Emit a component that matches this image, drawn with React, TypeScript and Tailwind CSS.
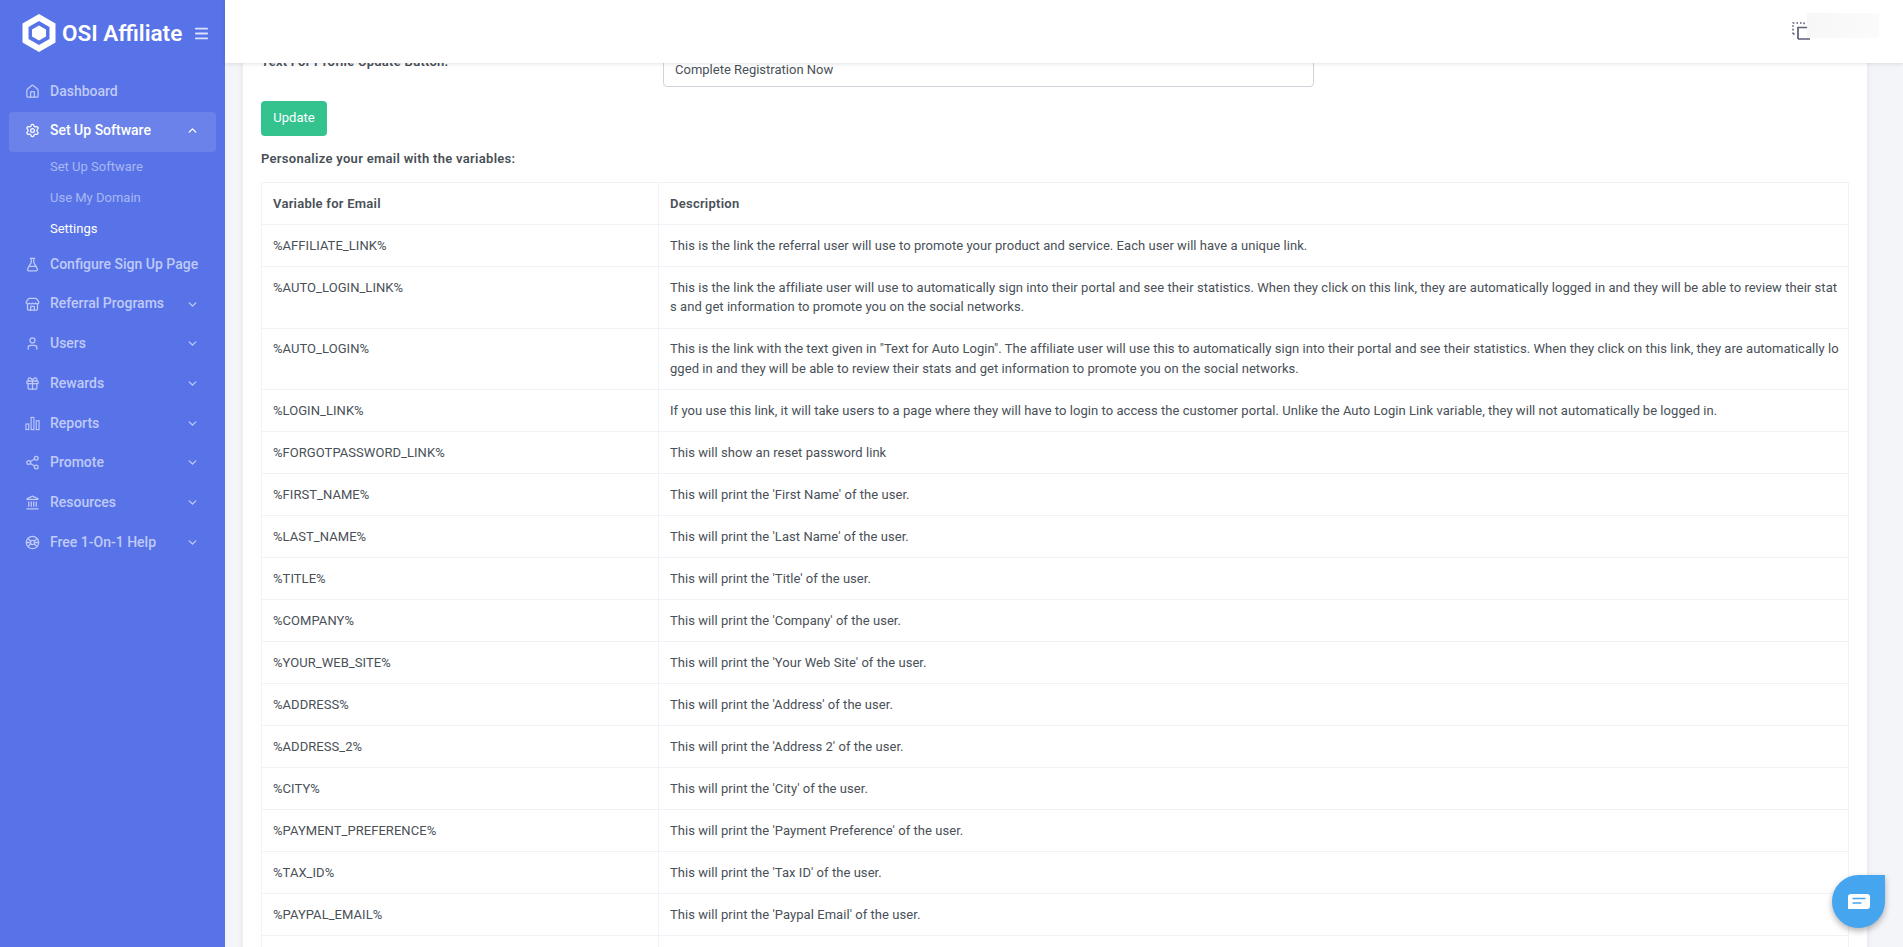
import { ChevronDown, ChevronUp, FlaskConical, Gift, Home, Landmark, Menu, Settings, Share2, Store, User } from "lucide-react";
import type { ReactNode } from "react";

const iconClass = "h-[15px] w-[15px]";

function ChartIcon() {
  return (
    <svg viewBox="0 0 16 16" className={iconClass} fill="none" stroke="currentColor" strokeWidth="1.2">
      <rect x="1" y="8.5" width="3" height="6" />
      <rect x="6.5" y="1.5" width="3" height="13" />
      <rect x="12" y="5" width="3" height="9.5" />
    </svg>
  );
}

function HelpIcon() {
  return (
    <svg viewBox="0 0 16 16" className={iconClass} fill="none" stroke="currentColor" strokeWidth="1.4">
      <circle cx="8" cy="8" r="6.6" />
      <circle cx="8" cy="8" r="2.2" />
      <path d="M3 3.5 6 6.4M13 3.5l-3 2.9M3 12.5l3-2.9M13 12.5l-3-2.9M1.5 8h4M10.5 8h4" />
    </svg>
  );
}

const lowerNav: { label: string; icon: ReactNode }[] = [
  { label: "Referral Programs", icon: <Store className={iconClass} /> },
  { label: "Users", icon: <User className={iconClass} /> },
  { label: "Rewards", icon: <Gift className={iconClass} /> },
  { label: "Reports", icon: <ChartIcon /> },
  { label: "Promote", icon: <Share2 className={iconClass} /> },
  { label: "Resources", icon: <Landmark className={iconClass} /> },
  { label: "Free 1-On-1 Help", icon: <HelpIcon /> },
];

const rows: { name: string; lines: string[] }[] = [
  { name: "%AFFILIATE_LINK%", lines: ["This is the link the referral user will use to promote your product and service. Each user will have a unique link."] },
  {
    name: "%AUTO_LOGIN_LINK%",
    lines: [
      "This is the link the affiliate user will use to automatically sign into their portal and see their statistics. When they click on this link, they are automatically logged in and they will be able to review their stat",
      "s and get information to promote you on the social networks.",
    ],
  },
  {
    name: "%AUTO_LOGIN%",
    lines: [
      'This is the link with the text given in "Text for Auto Login". The affiliate user will use this to automatically sign into their portal and see their statistics. When they click on this link, they are automatically lo',
      "gged in and they will be able to review their stats and get information to promote you on the social networks.",
    ],
  },
  { name: "%LOGIN_LINK%", lines: ["If you use this link, it will take users to a page where they will have to login to access the customer portal. Unlike the Auto Login Link variable, they will not automatically be logged in."] },
  { name: "%FORGOTPASSWORD_LINK%", lines: ["This will show an reset password link"] },
  { name: "%FIRST_NAME%", lines: ["This will print the 'First Name' of the user."] },
  { name: "%LAST_NAME%", lines: ["This will print the 'Last Name' of the user."] },
  { name: "%TITLE%", lines: ["This will print the 'Title' of the user."] },
  { name: "%COMPANY%", lines: ["This will print the 'Company' of the user."] },
  { name: "%YOUR_WEB_SITE%", lines: ["This will print the 'Your Web Site' of the user."] },
  { name: "%ADDRESS%", lines: ["This will print the 'Address' of the user."] },
  { name: "%ADDRESS_2%", lines: ["This will print the 'Address 2' of the user."] },
  { name: "%CITY%", lines: ["This will print the 'City' of the user."] },
  { name: "%PAYMENT_PREFERENCE%", lines: ["This will print the 'Payment Preference' of the user."] },
  { name: "%TAX_ID%", lines: ["This will print the 'Tax ID' of the user."] },
  { name: "%PAYPAL_EMAIL%", lines: ["This will print the 'Paypal Email' of the user."] },
];

function NavItem({ label, icon, chevron = true }: { label: string; icon: ReactNode; chevron?: boolean }) {
  return (
    <div className="flex h-[39.7px] items-center pl-[25px] pr-[26px] text-[#bfcaf7]">
      <span className="flex w-[25px] shrink-0">{icon}</span>
      <span className="flex-1 whitespace-nowrap text-[14px] font-medium">{label}</span>
      {chevron && <ChevronDown className="h-[13px] w-[13px]" strokeWidth={2.5} />}
    </div>
  );
}

export default function App() {
  return (
    <div className="flex h-screen overflow-hidden bg-[#f4f5f8] font-['Roboto',sans-serif] text-[13px] leading-[19.5px] text-[#495057]">
      <aside className="flex w-[225px] shrink-0 flex-col bg-[#5873e8]">
        <div className="flex h-[63px] items-center pl-[22px] pr-[15px] pt-[3px] text-white">
          <svg viewBox="0 0 34 38" className="h-[38px] w-[34px] shrink-0">
            <path fillRule="evenodd" fill="#fff" d="M17 0 33.5 9.5v19L17 38 .5 28.5v-19ZM17 7 6.5 13v12L17 31l10.500-6V13Z" />
            <path fill="#fff" d="M17 11.500 24 15.500v7L17 26.500l-7-4v-7Z" />
          </svg>
          <span className="ml-[6px] flex-1 whitespace-nowrap text-[22.5px] font-semibold leading-none">OSI Affiliate</span>
          <Menu className="h-[17px] w-[17px] text-[#dbe1fb]" strokeWidth={2.5} />
        </div>
        <nav className="pt-[9px]">
          <NavItem label="Dashboard" icon={<Home className={iconClass} />} chevron={false} />
          <div className="mx-[9px] flex h-10 items-center rounded-[4px] bg-[#6a82ea] pb-[2px] pl-4 pr-[17px] text-white">
            <span className="flex w-[25px] shrink-0">
              <Settings className={iconClass} />
            </span>
            <span className="flex-1 text-[14px] font-medium">Set Up Software</span>
            <ChevronUp className="h-[13px] w-[13px]" strokeWidth={2.5} />
          </div>
          <div className="flex flex-col pl-[50px] text-[13px]">
            <span className="flex h-[31px] items-center text-[#a9b7f3]">Set Up Software</span>
            <span className="flex h-[31px] items-center text-[#a9b7f3]">Use My Domain</span>
            <span className="flex h-[31px] items-center text-white">Settings</span>
          </div>
          <NavItem label="Configure Sign Up Page" icon={<FlaskConical className={iconClass} />} chevron={false} />
          {lowerNav.map((item) => (
            <NavItem key={item.label} label={item.label} icon={item.icon} />
          ))}
        </nav>
      </aside>

      <div className="flex min-w-0 flex-1 flex-col">
        <header className="relative z-10 flex h-[63px] shrink-0 items-center justify-end bg-white pr-[24px] shadow-[0_1px_4px_rgba(15,34,58,0.12)]">
          <svg viewBox="0 0 18 18" className="mt-[-1px] h-[18px] w-[18px] text-[#5b5f78]" fill="none" stroke="currentColor">
            <path strokeWidth="1.5" strokeDasharray="1.6 2" d="M1 12V1h11v3M1 12h3" />
            <path strokeWidth="1.7" d="M6 17V5.500h12M6 17h12" />
          </svg>
          <div className="mb-[12px] ml-[-3px] h-[25px] w-[72px] bg-gradient-to-r from-[#f7f7f8] to-[#fbfbfb]" />
        </header>

        <main className="min-h-0 flex-1 overflow-hidden pl-[18px] pr-[36px]">
          <section className="-mt-[20px] bg-white px-[18px] pb-6 pt-[7px] shadow-[0_0_6px_rgba(15,34,58,0.08)]">
            <div className="flex items-start">
              <label className="w-[402px] shrink-0 pt-[2px] font-semibold tracking-[0.25px]">Text For Profile Update Button:</label>
              <input
                readOnly
                value="Complete Registration Now"
                className="h-[37px] w-[651px] rounded-[4px] border border-[#ced4da] bg-white px-[11px] pt-[1px] text-[13px] text-[#495057] outline-none"
              />
            </div>
            <button className="mt-[14px] flex h-[35px] w-[66px] items-center justify-center rounded-[4px] bg-[#34c38f] pb-[1px] text-[13px] text-white">
              Update
            </button>
            <p className="mt-[13px] font-semibold tracking-[0.3px]">Personalize your email with the variables:</p>
            <table className="mt-[13.5px] w-full table-fixed border-collapse tracking-[0.05px]">
              <thead>
                <tr>
                  <th className="w-[397px] border border-[#eff2f7] px-[11px] py-[10.75px] text-left font-semibold tracking-[0.25px]">Variable for Email</th>
                  <th className="border border-[#eff2f7] px-[11px] py-[10.75px] text-left font-semibold tracking-[0.25px]">Description</th>
                </tr>
              </thead>
              <tbody>
                {rows.map((row) => (
                  <tr key={row.name}>
                    <td className="border border-[#eff2f7] px-[11px] py-[10.75px] align-top">{row.name}</td>
                    <td className="border border-[#eff2f7] px-[11px] py-[10.75px] align-top">
                      {row.lines.map((line) => (
                        <div key={line} className="whitespace-nowrap">
                          {line}
                        </div>
                      ))}
                    </td>
                  </tr>
                ))}
                <tr>
                  <td className="h-[42px] border border-[#eff2f7]" />
                  <td className="h-[42px] border border-[#eff2f7]" />
                </tr>
              </tbody>
            </table>
          </section>
        </main>
      </div>

      <button className="fixed bottom-[19px] right-[18px] flex h-[53px] w-[53px] items-center justify-center rounded-full rounded-tr-[6px] bg-[#45a5ee] shadow-[0_3px_6px_rgba(0,0,0,0.3)]">
        <svg viewBox="0 0 22 15" className="h-[15px] w-[22px]">
          <path fill="#fff" d="M3 0h16a3 3 0 0 1 3 3v9a3 3 0 0 1-3 3H0V3a3 3 0 0 1 3-3Z" />
          <path stroke="#45a5ee" strokeWidth="1.3" strokeLinecap="round" d="M5 4.500h12M5 9h8" />
        </svg>
      </button>
    </div>
  );
}
